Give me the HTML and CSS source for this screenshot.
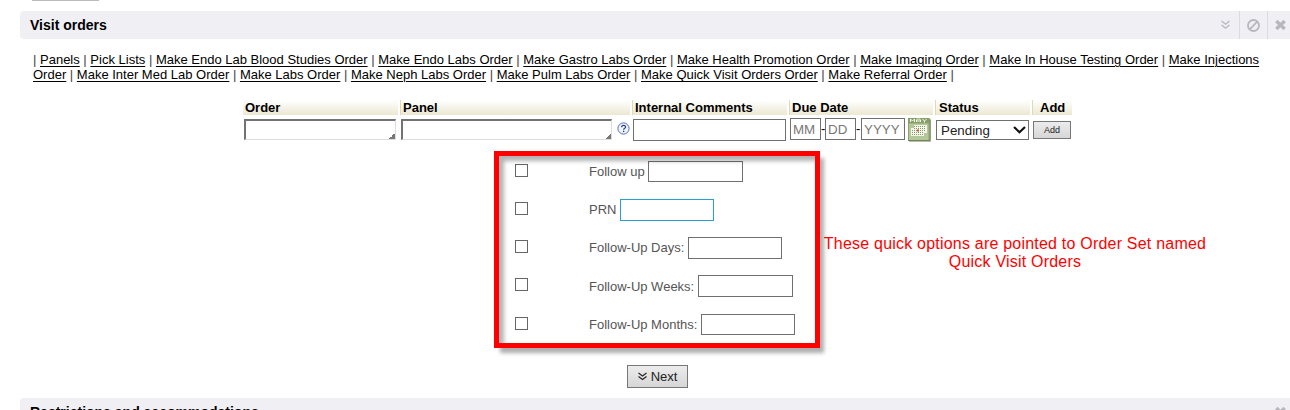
FILE: index.html
```html
<!DOCTYPE html>
<html lang="en">
<head>
<meta charset="utf-8">
<title>Visit orders</title>
<link rel="stylesheet" href="styles.css">
</head>
<body>
<div class="previous-button"></div>
<section class="visit-orders">
  <header class="bar">
    <h2 class="bar-title">Visit orders</h2>
    <span class="tool"><svg width="9" height="10" viewBox="0 0 9 10" fill="none" stroke="currentColor" stroke-width="1.4"><path d="M.6 1 4.5 4.2 8.4 1M.6 5 4.5 8.2 8.4 5"/></svg></span>
    <span class="tool divided"><svg width="13" height="13" viewBox="0 0 12 12" fill="none" stroke="currentColor" stroke-width="1.7"><circle cx="6" cy="6" r="5.1"/><path d="M2.5 9.5l7-7"/></svg></span>
    <span class="tool divided last"><svg width="11" height="10" viewBox="0 0 11 10" fill="none" stroke="currentColor" stroke-width="3.4"><path d="M1.3 1 9.7 9M9.7 1 1.3 9"/></svg></span>
  </header>
  <nav class="links">
    <div class="line line-a">| <a>Panels</a> | <a>Pick Lists</a> | <a>Make Endo Lab Blood Studies Order</a> | <a>Make Endo Labs Order</a> | <a>Make Gastro Labs Order</a> | <a>Make Health Promotion Order</a> | <a>Make Imaging Order</a> | <a>Make In House Testing Order</a> | <a>Make Injections</a></div>
    <div class="line line-b"><a>Order</a> | <a>Make Inter Med Lab Order</a> | <a>Make Labs Order</a> | <a>Make Neph Labs Order</a> | <a>Make Pulm Labs Order</a> | <a>Make Quick Visit Orders Order</a> | <a>Make Referral Order</a> |</div>
  </nav>
  <div class="order-grid">
    <div class="head first">Order</div>
    <div class="head">Panel</div>
    <div class="head">Internal Comments</div>
    <div class="head due">Due Date</div>
    <div class="head status">Status</div>
    <div class="head add">Add</div>
    <div class="cell"><span class="lookup order-box"></span></div>
    <div class="cell"><span class="lookup panel-box"></span><svg class="help" width="13" height="13" viewBox="0 0 13 13"><circle cx="6.5" cy="6.5" r="5.6" fill="#eef3fc" stroke="#5670bd"/><path d="M4.6 5.2c0-2.5 4-2.4 4-.2 0 1.4-2 1.3-2 2.8" fill="none" stroke="#30407e" stroke-width="1.2"/><path d="M5.9 8.7h1.4v1.4H5.9z" fill="#30407e"/></svg></div>
    <div class="cell"><span class="field comments"></span></div>
    <div class="cell"><span class="field date">MM</span><span class="dash">-</span><span class="field date">DD</span><span class="dash wide">-</span><span class="field date year">YYYY</span>
      <svg class="calendar" width="23" height="25" viewBox="0 0 23 25"><path d="M1 1h22v23H1z" fill="#b9bdb0"/><path d="M0 0h21.500v23H0z" fill="#8ba46c"/><path d="M1 5.500h19.500v16.500H1z" fill="#b5c69b"/><path d="M0 0h21.500v5H0z" fill="#88a068"/><path d="M2.500 4V1l2 2 2-2v3M8.500 4V2l1-1h2l1 1v2M9 3h3M14.500 1l2 2 2-2M16.500 3v1.500" fill="none" stroke="#fff" stroke-width=".9"/><path d="M6 7h13v8h-3v3H3v-8h3z" fill="#f4f6e9"/><path d="M6 8.500h12M6 10.500h12M4 12.500h14M4 14.500h12M4 16.500h11" fill="none" stroke="#849b69" stroke-dasharray="1 1"/><path d="M9 11.500h2v2H9z" fill="#d94a36"/><path d="M0 22.500h22V2" fill="none" stroke="#6e8554"/></svg>
    </div>
    <div class="cell"><span class="field select">Pending<svg width="13" height="8" viewBox="0 0 13 8" fill="none" stroke="#111" stroke-width="2.2"><path d="M1 1l5.500 5.200L12 1"/></svg></span></div>
    <div class="cell"><span class="button add-button">Add</span></div>
  </div>
  <div class="options">
    <div class="option follow"><span class="check"></span><span class="name">Follow up</span><span class="field amount"></span></div>
    <div class="option prn"><span class="check"></span><span class="name">PRN</span><span class="field amount active"></span></div>
    <div class="option days"><span class="check"></span><span class="name">Follow-Up Days:</span><span class="field amount"></span></div>
    <div class="option weeks"><span class="check"></span><span class="name">Follow-Up Weeks:</span><span class="field amount"></span></div>
    <div class="option months"><span class="check"></span><span class="name">Follow-Up Months:</span><span class="field amount"></span></div>
  </div>
  <span class="button next"><svg width="9" height="9" viewBox="0 0 9 9" fill="none" stroke="#222" stroke-width="1.200"><path d="M.5 1 4.500 3.900 8.500 1M.5 4.500 4.500 7.400 8.500 4.500"/></svg>Next</span>
</section>
<header class="bar following">
  <h2 class="bar-title">Restrictions and accommodations</h2>
  <span class="tool last"><svg width="11" height="10" viewBox="0 0 11 10" fill="none" stroke="currentColor" stroke-width="3.4"><path d="M1.300 1 9.700 9M9.700 1 1.300 9"/></svg></span>
</header>
<div class="callout"></div>
<p class="note">These quick options are pointed to Order Set named<br>Quick Visit Orders</p>
</body>
</html>
```
FILE: styles.css
```css
* { box-sizing: border-box; }
body {
  margin: 0;
  width: 1290px;
  height: 410px;
  overflow: hidden;
  position: relative;
  background: #fff;
  color: #000;
  font: 13px/15px "Liberation Sans", Arial, sans-serif;
}
svg { display: block; flex: none; }
.previous-button { width: 67px; height: 1px; margin-left: 32px; background: #bbb; }
.visit-orders { height: 387px; margin-top: 10px; }
.bar {
  display: flex;
  height: 28px;
  margin-left: 20px;
  background: #f0eff4;
  border-radius: 4px 0 0 4px;
}
.bar-title { flex: 1; margin: 0; padding-left: 10px; font-size: 14px; line-height: 28px; white-space: nowrap; }
.tool { display: flex; width: 28px; align-items: center; justify-content: center; color: #b8b7bf; }
.divided { border-left: 1px solid #dbdae0; }
.last { width: 23px; padding-left: 3px; }
.links { margin: 13px 0 0 33px; height: 30px; color: #444; }
.line { width: max-content; height: 15px; white-space: nowrap; }
.line a { color: #000; text-decoration: underline; text-underline-offset: 2px; text-decoration-thickness: 1px; }
.order-grid {
  display: grid;
  grid-template-columns: 155px 230px 155px 144px 95px 40px;
  grid-template-rows: 15px 24px;
  gap: 3px 2px;
  width: 829px;
  margin: 18px 0 0 243px;
}
.head {
  padding-left: 2px;
  border-left: 1px solid #dedab8;
  background: linear-gradient(#fff, #ece8d2);
  font-weight: bold;
  white-space: nowrap;
}
.head.first { border-left: 0; }
.head.status { padding-left: 3px; }
.head.add { padding-left: 7px; }
.cell { display: flex; align-items: flex-start; padding-left: 1px; }
.field { display: flex; flex: none; align-items: center; border: 1px solid #707070; background: #fff; }
.lookup {
  flex: none;
  height: 21px;
  margin-top: 1px;
  border: 1px solid #ddd;
  border-top: 2px solid #737373;
  border-left: 2px solid #737373;
  background: linear-gradient(135deg, #fff 50%, #777 50%) right bottom / 6px 6px no-repeat;
}
.order-box { width: 152px; }
.panel-box { width: 211px; }
.help { margin: 4px 0 0 5px; }
.comments { width: 153px; height: 22px; margin-top: 1px; }
.date { width: 31px; height: 22px; padding-left: 2px; color: #777; font-size: 13.333px; }
.year { width: 44px; }
.dash { width: 4px; line-height: 21px; }
.dash.wide { width: 5px; }
.calendar { margin-left: 3px; }
.select { width: 93px; height: 20px; margin-top: 2px; padding: 0 2px 0 4px; justify-content: space-between; color: #222; font-size: 13.333px; }
.button {
  display: flex;
  align-items: center;
  justify-content: center;
  border: 1px solid #777;
  background: linear-gradient(#ececec, #d6d6d6);
  color: #222;
}
.add-button { width: 38px; height: 18px; margin-top: 3px; font-size: 9px; }
.options { width: 316px; margin: 10px 0 0 499px; padding-top: 1px; height: 199px; }
.option { display: flex; height: 38px; padding: 8px 0 0 16px; }
.check { flex: none; width: 13px; height: 13px; margin-top: 3px; border: 1px solid #666; }
.name { flex: none; margin: 3px 0 0 61px; color: #555; white-space: nowrap; }
.amount { width: 95px; height: 21px; }
.follow .name { width: 59px; }
.prn .name { width: 31px; }
.days .name { width: 99px; }
.weeks .name { width: 109px; margin-top: 4px; }
.months .name { width: 112px; }
.prn .amount, .days .amount, .months .amount { width: 94px; }
.prn .amount, .days .amount, .weeks .amount { height: 22px; }
.weeks { height: 39px; }
.amount.active { border-color: #299fd4; }
.next { width: 61px; height: 23px; margin: 14px 0 0 627px; gap: 4px; }
.callout {
  position: absolute;
  left: 494px;
  top: 151px;
  width: 326px;
  height: 197px;
  border: 5px solid #f00;
  box-shadow: 5px 6px 4px -1px rgba(0, 0, 0, .32), inset 6px 6px 4px -1px rgba(0, 0, 0, .3);
}
.note {
  position: absolute;
  left: 815px;
  top: 235px;
  width: 400px;
  margin: 0;
  color: #f00;
  font-size: 16px;
  letter-spacing: .21px;
  line-height: 18px;
  text-align: center;
  white-space: nowrap;
}
```
